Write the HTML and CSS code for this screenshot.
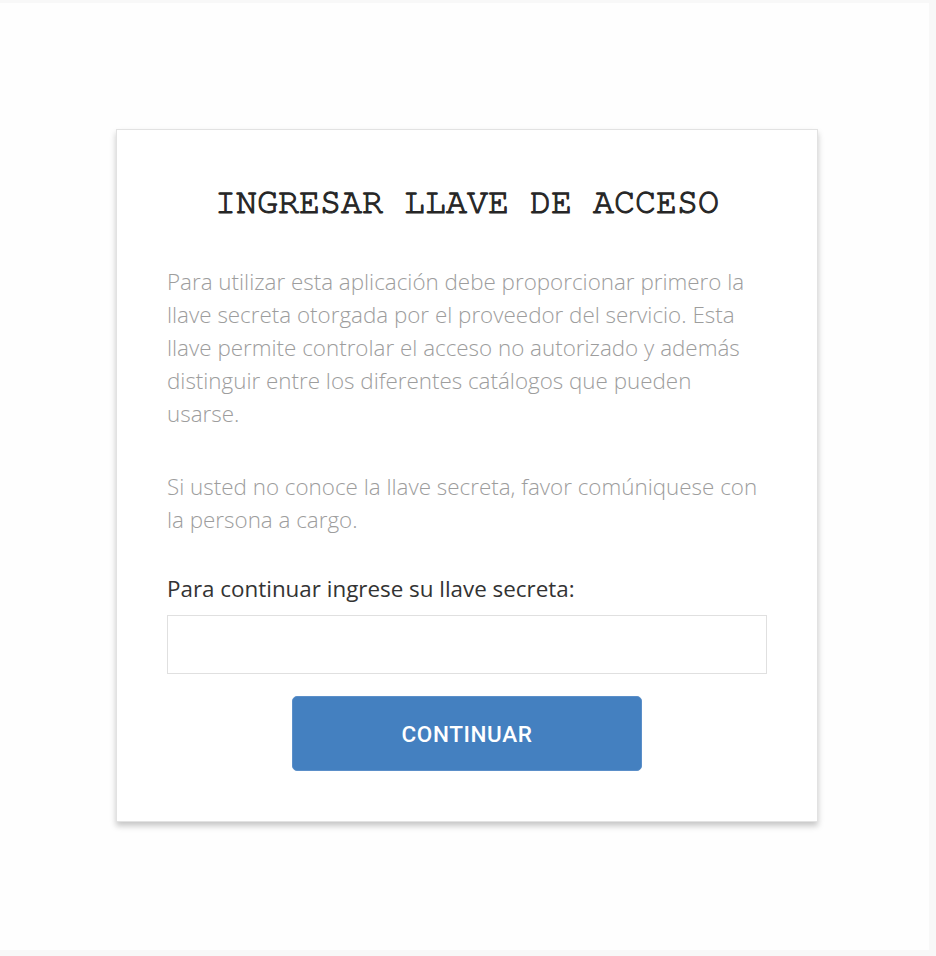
FILE: index.html
```html
<!DOCTYPE html>
<html lang="es">
<head>
<meta charset="utf-8">
<title>Ingresar llave de acceso</title>
<link rel="stylesheet" href="styles.css">
</head>
<body>
<div class="page">
  <div class="card">
    <h1 class="title">INGRESAR LLAVE DE ACCESO</h1>
    <p class="text">Para utilizar esta aplicación debe proporcionar primero la llave secreta otorgada por el proveedor del servicio. Esta llave permite controlar el acceso no autorizado y además distinguir entre los diferentes catálogos que pueden usarse.</p>
    <p class="text">Si usted no conoce la llave secreta, favor comúniquese con la persona a cargo.</p>
    <label class="label" for="key">Para continuar ingrese su llave secreta:</label>
    <input class="input" id="key" type="text">
    <button class="button" type="button">CONTINUAR</button>
  </div>
</div>
</body>
</html>
```

FILE: styles.css
```css
html, body {
  margin: 0;
  padding: 0;
}
body {
  background: #f8f8f8;
  font-family: "Open Sans", sans-serif;
}
.page {
  margin-top: 3px;
  width: 929px;
  height: 947px;
  background: #fefefe;
  padding-top: 126px;
  box-sizing: border-box;
}
.card {
  margin-left: 116px;
  width: 702px;
  height: 693px;
  box-sizing: border-box;
  background: #fff;
  border: 1px solid #e2e2e2;
  box-shadow: 0 4px 6px rgba(0, 0, 0, 0.22);
  padding: 53px 50px 0 50px;
  display: flex;
  flex-direction: column;
}
.title {
  margin: 0 0 42px 0;
  font-family: "Nimbus Mono PS", "Nimbus Mono L", "FreeMono", "Courier", "Liberation Mono", monospace;
  font-weight: normal;
  -webkit-text-stroke: 1.1px #262626;
  font-size: 35px;
  line-height: 40px;
  text-align: center;
  color: #262626;
}
.text {
  margin: 0 0 40px 0;
  font-size: 22.4px;
  font-weight: 300;
  line-height: 33px;
  color: #9d9d9d;
}
.label {
  margin-top: -2px;
  font-size: 22.4px;
  line-height: 30px;
  color: #333;
  font-weight: 400;
}
.input {
  margin-top: 11px;
  height: 59px;
  box-sizing: border-box;
  border: 1px solid #e0e0e0;
  border-radius: 0;
  outline: none;
  width: 100%;
  font-size: 18px;
  padding: 0 12px;
}
.button {
  margin-top: 22px;
  align-self: center;
  width: 350px;
  height: 75px;
  border: 1px solid #5b8fc9;
  border-radius: 5px;
  background: #4480c0;
  color: #fff;
  font-family: "Roboto", "Liberation Sans", Arial, sans-serif;
  font-weight: 500;
  font-size: 22.5px;
  letter-spacing: 0.6px;
  cursor: pointer;
}
```
